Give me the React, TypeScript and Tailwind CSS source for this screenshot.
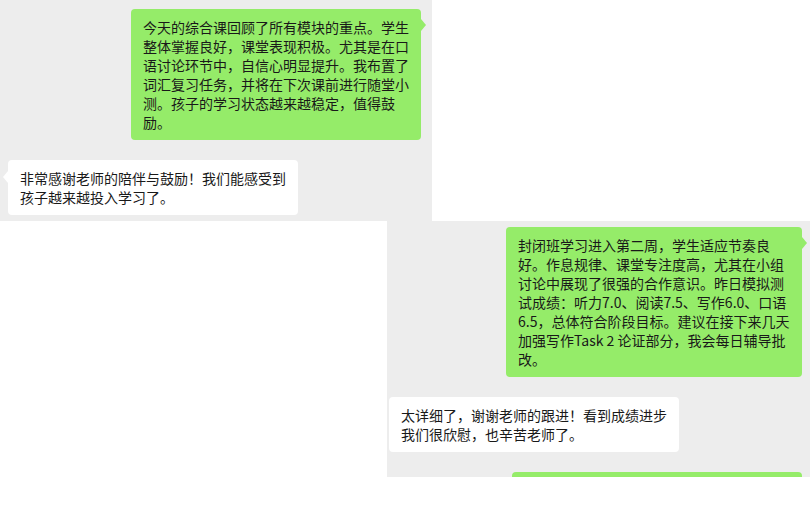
import React from "react";

const font = "font-['Noto_Sans_CJK_SC',sans-serif] text-[14px] leading-[19px] text-[#191919] whitespace-nowrap";

function Lines({ lines }: { lines: string[] }) {
  return (
    <>
      {lines.map((l, i) => (
        <div key={i}>{l}</div>
      ))}
    </>
  );
}

function Green({ lines, w, tail = true, className = "" }: { lines: string[]; w: string; tail?: boolean; className?: string }) {
  return (
    <div className={`relative bg-[#95ec69] rounded-[4px] pl-[12px] pt-[9px] pb-[8px] ${w} ${font} ${className}`}>
      <Lines lines={lines} />
      {tail && (
        <span className="absolute left-full top-[10px] w-0 h-0 border-y-[6px] border-y-transparent border-l-[5px] border-l-[#95ec69]" />
      )}
    </div>
  );
}

function White({ lines, w, tail = true, className = "" }: { lines: string[]; w: string; tail?: boolean; className?: string }) {
  return (
    <div className={`relative bg-white rounded-[4px] pl-[12px] pt-[9px] pb-[8px] ${w} ${font} ${className}`}>
      <Lines lines={lines} />
      {tail && (
        <span className="absolute right-full top-[11px] w-0 h-0 border-y-[6px] border-y-transparent border-r-[5px] border-r-white" />
      )}
    </div>
  );
}

export default function App() {
  return (
    <div className="w-[810px] h-[510px] bg-white overflow-hidden flex flex-col">
      <div className="w-[432px] h-[221px] shrink-0 bg-[#ededed] flex flex-col overflow-hidden">
        <Green
          w="w-[290px]"
          className="self-end mr-[11px] mt-[9px]"
          lines={[
            "今天的综合课回顾了所有模块的重点。学生",
            "整体掌握良好，课堂表现积极。尤其是在口",
            "语讨论环节中，自信心明显提升。我布置了",
            "词汇复习任务，并将在下次课前进行随堂小",
            "测。孩子的学习状态越来越稳定，值得鼓",
            "励。",
          ]}
        />
        <White
          w="w-[290px]"
          className="self-start ml-[8px] mt-[20px]"
          lines={["非常感谢老师的陪伴与鼓励！我们能感受到", "孩子越来越投入学习了。"]}
        />
      </div>
      <div className="ml-[387px] w-[423px] h-[256px] shrink-0 bg-[#ededed] flex flex-col overflow-hidden">
        <Green
          w="w-[296px]"
          className="self-end mr-[8px] mt-[6px] shrink-0"
          lines={[
            "封闭班学习进入第二周，学生适应节奏良",
            "好。作息规律、课堂专注度高，尤其在小组",
            "讨论中展现了很强的合作意识。昨日模拟测",
            "试成绩：听力7.0、阅读7.5、写作6.0、口语",
            "6.5，总体符合阶段目标。建议在接下来几天",
            "加强写作Task 2 论证部分，我会每日辅导批",
            "改。",
          ]}
        />
        <White
          w="w-[290px]"
          tail={false}
          className="self-start ml-[2px] mt-[20px] shrink-0"
          lines={["太详细了，谢谢老师的跟进！看到成绩进步", "我们很欣慰，也辛苦老师了。"]}
        />
        <div className="self-end mr-[8px] mt-[20px] w-[290px] h-[60px] shrink-0 bg-[#95ec69] rounded-[4px]" />
      </div>
    </div>
  );
}
